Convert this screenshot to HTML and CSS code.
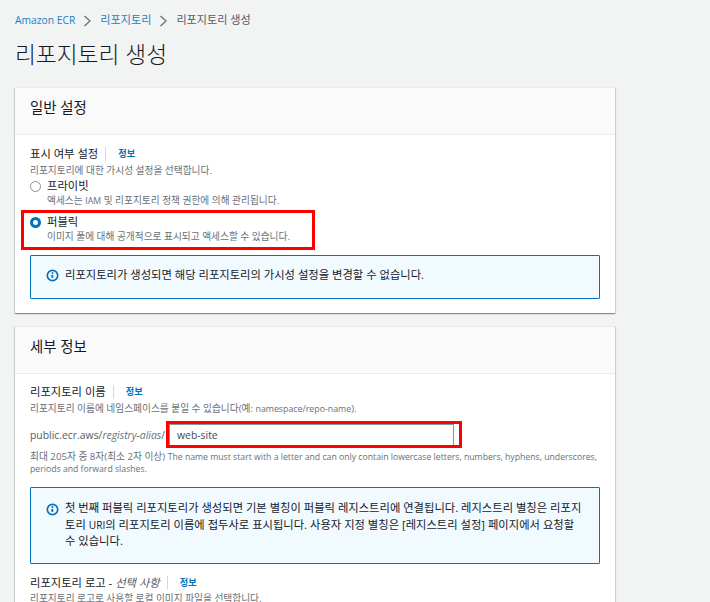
FILE: index.html
```html
<!DOCTYPE html>
<html lang="ko">
<head>
<meta charset="utf-8">
<title>리포지토리 생성</title>
<link rel="stylesheet" href="styles.css">
</head>
<body>
<main class="page">
  <nav class="crumbs">
    <a class="link link-latin">Amazon ECR</a>
    <svg class="chev" viewBox="0 0 9 12"><path d="M1.500 1 7 6l-5.500 5" fill="none" stroke="#687078" stroke-width="1.300"/></svg>
    <a class="link">리포지토리</a>
    <svg class="chev" viewBox="0 0 9 12"><path d="M1.500 1 7 6l-5.500 5" fill="none" stroke="#687078" stroke-width="1.300"/></svg>
    <span class="crumb-cur">리포지토리 생성</span>
  </nav>
  <h1 class="title">리포지토리 생성</h1>

  <section class="card card-general">
    <header class="card-head"><h2>일반 설정</h2></header>
    <div class="card-body">
      <div class="label-row"><span class="label">표시 여부 설정</span><span class="info">정보</span></div>
      <p class="hint">리포지토리에 대한 가시성 설정을 선택합니다.</p>
      <div class="radio">
        <span class="dot"></span>
        <div><div class="radio-name">프라이빗</div><p class="hint">액세스는 <span class="latin">IAM</span> 및 리포지토리 정책 권한에 의해 관리됩니다.</p></div>
      </div>
      <div class="radio radio-public">
        <span class="dot dot-on"></span>
        <div><div class="radio-name">퍼블릭</div><p class="hint">이미지 풀에 대해 공개적으로 표시되고 액세스할 수 있습니다.</p></div>
        <span class="mark mark-public"></span>
      </div>
      <div class="alert alert-short">
        <svg class="alert-icon" viewBox="0 0 14 14"><circle cx="7" cy="7" r="5.600" fill="none" stroke="#0073bb" stroke-width="1.800"/><circle cx="7" cy="4.400" r="1.100" fill="#0073bb"/><path d="M5.800 6.300h2v3.300h-2z" fill="#0073bb"/></svg>
        <p>리포지토리가 생성되면 해당 리포지토리의 가시성 설정을 변경할 수 없습니다.</p>
      </div>
    </div>
  </section>

  <section class="card card-detail">
    <header class="card-head"><h2>세부 정보</h2></header>
    <div class="card-body">
      <div class="label-row"><span class="label">리포지토리 이름</span><span class="info">정보</span></div>
      <p class="hint">리포지토리 이름에 네임스페이스를 붙일 수 있습니다(예: <span class="latin">namespace/repo-name</span>).</p>
      <div class="name-row">
        <span class="prefix">public.ecr.aws/<em>registry-alias</em>/</span>
        <div class="input">web-site<span class="mark mark-input"></span></div>
      </div>
      <p class="hint hint-limit">최대 205자 중 8자(최소 2자 이상) <span class="latin-limit">The name must start with a letter and can only contain lowercase letters, numbers, hyphens, underscores, periods and forward slashes.</span></p>
      <div class="alert alert-long">
        <svg class="alert-icon" viewBox="0 0 14 14"><circle cx="7" cy="7" r="5.600" fill="none" stroke="#0073bb" stroke-width="1.800"/><circle cx="7" cy="4.400" r="1.100" fill="#0073bb"/><path d="M5.800 6.300h2v3.300h-2z" fill="#0073bb"/></svg>
        <p>첫 번째 퍼블릭 리포지토리가 생성되면 기본 별칭이 퍼블릭 레지스트리에 연결됩니다. 레지스트리 별칭은 리포지토리 <span class="latin-alert">URI</span>의 리포지토리 이름에 접두사로 표시됩니다. 사용자 지정 별칭은 [레지스트리 설정] 페이지에서 요청할 수 있습니다.</p>
      </div>
      <div class="label-row label-logo"><span class="label">리포지토리 로고 - <em>선택 사항</em></span><span class="info">정보</span></div>
      <p class="hint">리포지토리 로고로 사용할 로컬 이미지 파일을 선택합니다.</p>
    </div>
  </section>
</main>
</body>
</html>
```
FILE: styles.css
```css
* { box-sizing: border-box; }
html, body { margin: 0; height: 602px; overflow: hidden; background: #f2f3f3; }
body { font-family: "Open Sans", "Noto Sans CJK KR", sans-serif; color: #16191f; }
p, h1, h2 { margin: 0; font-weight: 400; }
.page { width: 615px; padding: 12px 0 0 15px; }
.crumbs { display: flex; align-items: center; height: 16px; font-size: 11.100px; line-height: 16px; }
.link { color: #1b80c4; }
.link-latin { font-size: 10.300px; }
.crumb-cur { color: #545b64; }
.chev { width: 9px; height: 12px; margin: 1px 8px 0; }
.title { font-size: 22.700px; line-height: 30px; margin-top: 12px; color: #16191f; font-weight: 300; }
.card { width: 600px; background: #fff; box-shadow: 0 1px 1px 0 rgba(0,28,36,.3), 1px 1px 1px 0 rgba(0,28,36,.12), -1px 1px 1px 0 rgba(0,28,36,.12); border-top: 1px solid #eaeded; }
.card-general { margin-top: 17px; height: 226px; }
.card-detail { margin-top: 13px; height: 330px; }
.card-detail .card-body { padding-top: 11px; }
.card-head { height: 47px; padding: 9px 15px 0; background: #fafafa; border-bottom: 1px solid #eaeded; }
.card-head h2 { font-size: 14.400px; line-height: 22px; font-weight: 400; }
.card-body { padding: 12px 15px 0; }
.label-row { display: flex; align-items: center; height: 14px; margin-bottom: 3px; font-size: 11.300px; line-height: 14px; }
.label { padding-right: 7px; border-right: 1px solid #d5dbdb; color: #16191f; }
.label em { color: #545b64; }
.info { margin-left: 12px; font-size: 9.200px; font-weight: 700; color: #0073bb; }
.hint { font-size: 9.700px; line-height: 13px; color: #687078; }
.latin { font-size: 8.800px; }
.latin-limit { font-size: 8.700px; }
.latin-alert { font-size: 10.200px; }
.radio { display: flex; gap: 6px; position: relative; padding-top: 2px; }
.radio-name { font-size: 11.300px; line-height: 13px; }
.radio .hint { margin-top: 2px; }
.radio-public { margin-top: 5px; }
.dot { width: 11px; height: 11px; margin-top: 2px; flex: none; border-radius: 50%; border: 1px solid #879596; background: #fff; }
.dot-on { border: 3.500px solid #0073bb; }
.mark { position: absolute; border: 3px solid #f00; pointer-events: none; }
.mark-public { left: -9px; top: -3px; width: 294px; height: 40px; }
.alert { display: flex; gap: 6px; background: #f1faff; border: 1px solid #0073bb; border-radius: 1px; padding: 10px 13px 0 15px; font-size: 11.300px; line-height: 17px; color: #16191f; }
.alert p { word-break: break-all; }
.alert-short { margin-top: 12px; height: 44px; }
.alert-long { margin-top: 12px; height: 77px; padding-top: 12px; line-height: 16.500px; }
.alert-icon { width: 13px; height: 13px; flex: none; margin-top: 3px; }
.name-row { display: flex; align-items: center; margin-top: 9px; height: 20px; font-size: 10.400px; }
.prefix { color: #545b64; white-space: nowrap; width: 139px; }
.prefix em { color: #687078; }
.input { position: relative; width: 285px; height: 22px; padding: 1px 0 0 7px; background: #fff; border: 1px solid #879596; font-size: 10.400px; line-height: 18px; color: #444b54; }
.mark-input { left: -4px; top: -4px; width: 296px; height: 27px; }
.hint-limit { margin-top: 6px; line-height: 12px; width: 580px; }
.label-logo { margin-top: 12px; margin-bottom: 2px; }
```
